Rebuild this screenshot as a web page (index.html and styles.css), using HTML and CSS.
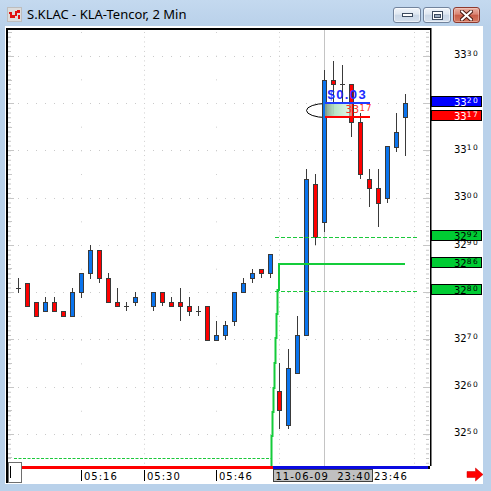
FILE: index.html
```html
<!DOCTYPE html>
<html>
<head>
<meta charset="utf-8">
<title>S.KLAC - KLA-Tencor, 2 Min</title>
<link rel="stylesheet" href="styles.css">
</head>
<body>
<div class="window">
  <div class="titlebar">
    <svg class="app-icon" width="15" height="15" viewBox="0 0 15 15">
      <rect x="0.5" y="0.5" width="14" height="14" fill="#dcdcdc" stroke="#bdbdbd"/>
      <rect x="2" y="5" width="3" height="2" fill="#e01010"/>
      <rect x="3" y="7" width="2" height="4" fill="#e01010"/>
      <rect x="5" y="8" width="3" height="3" fill="#e01010"/>
      <rect x="8" y="4" width="2" height="5" fill="#e01010"/>
      <rect x="10" y="3" width="3" height="3" fill="#e01010"/>
      <rect x="11" y="8" width="2" height="4" fill="#e01010"/>
    </svg>
    <span class="title">S.KLAC - KLA-Tencor, 2 Min</span>
    <div class="controls">
      <button class="btn">
        <svg width="13" height="6" viewBox="0 0 13 6"><rect x="1.5" y="1.5" width="10" height="3" fill="#fff" stroke="#3c4a5e"/></svg>
      </button>
      <button class="btn">
        <svg width="11" height="9" viewBox="0 0 11 9"><rect x="0.5" y="0.5" width="10" height="8" fill="#fff" stroke="#3c4a5e"/><rect x="2.5" y="3.5" width="6" height="3" fill="#9aaabf" stroke="#3c4a5e"/></svg>
      </button>
      <button class="btn close">
        <svg width="13" height="11" viewBox="0 0 13 11"><path d="M2 1.5 L11 9.5 M11 1.5 L2 9.5" stroke="#4a1a12" stroke-width="4" stroke-linecap="square"/><path d="M2 1.5 L11 9.5 M11 1.5 L2 9.5" stroke="#fff" stroke-width="2" stroke-linecap="square"/></svg>
      </button>
    </div>
  </div>

  <div class="client">
    <svg class="plot" width="426" height="440" viewBox="5 26 426 440">
      <defs>
        <linearGradient id="pnl" x1="0" x2="1" y1="0" y2="0">
          <stop offset="0" stop-color="#7f9c88" stop-opacity="0.95"/>
          <stop offset="0.35" stop-color="#b3e2c2" stop-opacity="0.95"/>
          <stop offset="1" stop-color="#c9eed5" stop-opacity="0.55"/>
        </linearGradient>
      </defs>

      <g class="grid">
        <line class="hdot" x1="18" x2="428" y1="56.5" y2="56.5"/>
        <line class="hdot" x1="18" x2="428" y1="103.5" y2="103.5"/>
        <line class="hdot" x1="18" x2="428" y1="150.5" y2="150.5"/>
        <line class="hdot" x1="18" x2="428" y1="198.5" y2="198.5"/>
        <line class="hdot" x1="18" x2="428" y1="245.5" y2="245.5"/>
        <line class="hdot" x1="18" x2="428" y1="292.5" y2="292.5"/>
        <line class="hdot" x1="18" x2="428" y1="339.5" y2="339.5"/>
        <line class="hdot" x1="18" x2="428" y1="387.5" y2="387.5"/>
        <line class="hdot" x1="18" x2="428" y1="434.5" y2="434.5"/>
        <line class="vdense" x1="144.5" x2="144.5" y1="32" y2="466"/>
        <line class="vdense" x1="279.5" x2="279.5" y1="32" y2="466"/>
        <line class="vdense" x1="414.5" x2="414.5" y1="32" y2="466"/>
        <line class="vsparse" x1="81.5" x2="81.5" y1="32" y2="466"/>
        <line class="vsparse" x1="216.5" x2="216.5" y1="32" y2="466"/>
        <line class="ticks" x1="9.5" x2="9.5" y1="32" y2="466"/>
        <line class="ticks" x1="427.5" x2="427.5" y1="32" y2="466"/>
        <path class="tick" d="M8 56.5h6M8 103.5h6M8 150.5h6M8 198.5h6M8 245.5h6M8 292.5h6M8 339.5h6M8 387.5h6M8 434.5h6
                               M8 80.5h4M8 127.5h4M8 174.5h4M8 221.5h4M8 268.5h4M8 316.5h4M8 363.5h4M8 410.5h4M8 457.5h4M8 32.5h4
                               M424 56.5h6M424 103.5h6M424 150.5h6M424 198.5h6M424 245.5h6M424 292.5h6M424 339.5h6M424 387.5h6M424 434.5h6"/>
      </g>

      <line class="cross" x1="324.5" x2="324.5" y1="28" y2="466"/>

      <path class="ellipse" d="M326 103.5 A19.5 7 0 0 0 326 117.5"/>

      <g class="wick">
        <path d="M18.5 278V293M45.5 297V302M54.5 297V302M72.5 288V292M81.5 292V298M90.5 245V279M99.5 278V283
                 M108.5 273V278M117.5 288V302M126.5 302V311M135.5 292V306M153.5 306V311M162.5 302V306M171.5 297V302
                 M180.5 288V321M189.5 297V316M198.5 306V316M216.5 321V335M225.5 321V340M234.5 321V326M243.5 278V283
                 M252.5 269V283M261.5 273V278M270.5 273V278M279.5 363V429M288.5 349V429M297.5 316V335M306.5 169V179
                 M315.5 174V245M324.5 70V232M333.5 61V114M342.5 65V103M351.5 122V137M360.5 113V179M369.5 169V207
                 M378.5 169V227M387.5 198V203M396.5 113V152M405.5 94V156"/>
        <path d="M16 288.5h5M124 306.5h5M196 311.5h5M340 84.5h5"/>
      </g>

      <g class="body">
        <rect class="dn" x="25.5" y="283.5" width="4" height="23"/>
        <rect class="dn" x="34.5" y="302.5" width="4" height="14"/>
        <rect class="up" x="43.5" y="302.5" width="4" height="9"/>
        <rect class="dn" x="52.5" y="302.5" width="4" height="9"/>
        <rect class="dn" x="61.5" y="311.5" width="4" height="5"/>
        <rect class="up" x="70.5" y="292.5" width="4" height="24"/>
        <rect class="up" x="79.5" y="273.5" width="4" height="19"/>
        <rect class="up" x="88.5" y="250.5" width="4" height="23"/>
        <rect class="dn" x="97.5" y="250.5" width="4" height="28"/>
        <rect class="dn" x="106.5" y="278.5" width="4" height="24"/>
        <rect class="dn" x="115.5" y="302.5" width="4" height="4"/>
        <rect class="up" x="133.5" y="297.5" width="4" height="5"/>
        <rect class="up" x="151.5" y="292.5" width="4" height="14"/>
        <rect class="dn" x="160.5" y="292.5" width="4" height="10"/>
        <rect class="dn" x="169.5" y="302.5" width="4" height="4"/>
        <rect class="dn" x="178.5" y="302.5" width="4" height="4"/>
        <rect class="dn" x="187.5" y="306.5" width="4" height="5"/>
        <rect class="dn" x="205.5" y="306.5" width="4" height="34"/>
        <rect class="up" x="214.5" y="335.5" width="4" height="5"/>
        <rect class="up" x="223.5" y="325.5" width="4" height="10"/>
        <rect class="up" x="232.5" y="292.5" width="4" height="29"/>
        <rect class="up" x="241.5" y="283.5" width="4" height="9"/>
        <rect class="up" x="250.5" y="273.5" width="4" height="5"/>
        <rect class="dn" x="259.5" y="269.5" width="4" height="4"/>
        <rect class="up" x="268.5" y="254.5" width="4" height="19"/>
        <rect class="dn" x="277.5" y="391.5" width="4" height="19"/>
        <rect class="up" x="286.5" y="368.5" width="4" height="57"/>
        <rect class="up" x="295.5" y="335.5" width="4" height="38"/>
        <rect class="up" x="304.5" y="179.5" width="4" height="156"/>
        <rect class="dn" x="313.5" y="184.5" width="4" height="53"/>
        <rect class="up" x="322.5" y="80.5" width="4" height="142"/>
        <rect class="dn" x="331.5" y="80.5" width="4" height="4"/>
        <rect class="dn" x="349.5" y="84.5" width="4" height="38"/>
        <rect class="dn" x="358.5" y="122.5" width="4" height="52"/>
        <rect class="dn" x="367.5" y="179.5" width="4" height="9"/>
        <rect class="dn" x="376.5" y="188.5" width="4" height="15"/>
        <rect class="up" x="385.5" y="146.5" width="4" height="52"/>
        <rect class="up" x="394.5" y="132.5" width="4" height="15"/>
        <rect class="up" x="403.5" y="103.5" width="4" height="14"/>
      </g>

      <line class="gdash" x1="275" x2="418" y1="237.5" y2="237.5"/>
      <line class="gdash" x1="275" x2="418" y1="291.5" y2="291.5"/>
      <line class="gdash small" x1="14" x2="271" y1="458.5" y2="458.5"/>
      <polyline class="step" points="271.5,466 271.5,436 272.5,436 272.5,412 273.5,412 273.5,388 274.5,388 274.5,363 275.5,363 275.5,338 276.5,338 276.5,314 277.5,314 277.5,290 279,290 279,264 405,264"/>

      <rect class="pnl" x="325" y="104" width="27" height="12"/>
      <rect class="bline" x="325" y="102" width="45" height="2"/>
      <rect class="rline" x="325" y="116" width="45" height="2"/>
      <text class="pnl-text" x="327.5" y="98.5">$0.03</text>
      <text class="pnl-price" x="345.5" y="113">33<tspan class="psup" dy="-2">17</tspan></text>

      <rect class="frame" x="6" y="28" width="2" height="438"/>
      <rect class="frame" x="6" y="28" width="425" height="2"/>
      <rect class="frame" x="430" y="28" width="1.5" height="438"/>
    </svg>

    <svg class="price-axis" width="52" height="440" viewBox="431 26 52 440">
      <g class="plabel">
        <text x="454" y="58">33<tspan class="sup" dy="-2.5">30</tspan></text>
        <text x="454" y="152.5">33<tspan class="sup" dy="-2.5">10</tspan></text>
        <text x="454" y="200">33<tspan class="sup" dy="-2.5">00</tspan></text>
        <text x="454" y="247.5">32<tspan class="sup" dy="-2.5">90</tspan></text>
        <text x="454" y="341.5">32<tspan class="sup" dy="-2.5">70</tspan></text>
        <text x="454" y="389">32<tspan class="sup" dy="-2.5">60</tspan></text>
        <text x="454" y="436">32<tspan class="sup" dy="-2.5">50</tspan></text>
      </g>
      <rect class="bx blue" x="431.5" y="96.5" width="50" height="10"/>
      <text class="plabel inv" x="454" y="105.5">33<tspan class="sup" dy="-2.5">20</tspan></text>
      <rect class="bx red" x="431.5" y="110.5" width="50" height="10"/>
      <text class="plabel inv" x="454" y="119.5">33<tspan class="sup" dy="-2.5">17</tspan></text>
      <rect class="bx green" x="431.5" y="230.5" width="50" height="10"/>
      <text class="plabel" x="454" y="239.5">32<tspan class="sup" dy="-2.5">92</tspan></text>
      <rect class="bx green" x="431.5" y="257.5" width="50" height="10"/>
      <text class="plabel" x="454" y="266.5">32<tspan class="sup" dy="-2.5">86</tspan></text>
      <rect class="bx green" x="431.5" y="284.5" width="50" height="10"/>
      <text class="plabel" x="454" y="293.5">32<tspan class="sup" dy="-2.5">80</tspan></text>
    </svg>

    <svg class="time-axis" width="478" height="18" viewBox="5 466 478 18">
      <rect class="frame" x="6" y="462" width="2" height="21"/>
      <rect class="sess-red" x="8" y="466" width="265" height="3"/>
      <rect class="sess-blue" x="273" y="466" width="156" height="3"/>
      <rect class="frame" x="428" y="466" width="2" height="3"/>
      <rect class="handle" x="8.5" y="462.5" width="13" height="20"/>
      <line class="caret" x1="10.5" x2="10.5" y1="466" y2="478"/>
      <path class="tmark" d="M81.5 470V481M144.5 470V481M216.5 470V481"/>
      <text class="tlabel" x="84" y="479.5">05:16</text>
      <text class="tlabel" x="147" y="479.5">05:30</text>
      <text class="tlabel" x="219" y="479.5">05:46</text>
      <rect class="datebox" x="273.5" y="469.5" width="99" height="12"/>
      <text class="tlabel" x="275.5" y="479.5" xml:space="preserve">11-06-09  23:40</text>
      <text class="tlabel" x="374" y="479.5">23:46</text>
      <path class="arrow" d="M467 471.5H475.5V468L483 474.5L475.5 481V477.5H467Z"/>
    </svg>
  </div>
</div>
</body>
</html>
```

FILE: styles.css
```css
html, body {
  margin: 0;
  padding: 0;
}
body {
  width: 491px;
  height: 491px;
  overflow: hidden;
  background: #b9d1ea;
}
.window {
  width: 491px;
  height: 491px;
  display: flex;
  flex-direction: column;
  background: linear-gradient(#c4d9ef 0px, #b9d1ea 26px, #b9d1ea 100%);
}
.titlebar {
  height: 26px;
  flex: none;
  display: flex;
  align-items: flex-start;
  padding: 7px 11px 0 7px;
  box-sizing: border-box;
}
.app-icon {
  display: block;
  flex: none;
}
.title {
  margin-left: 5px;
  margin-top: -1px;
  font-family: "Noto Sans", "DejaVu Sans", sans-serif;
  font-size: 13px;
  line-height: 16px;
  color: #000;
  white-space: nowrap;
}
.controls {
  margin-left: auto;
  display: flex;
  gap: 2px;
}
.btn {
  width: 28px;
  height: 16px;
  padding: 0;
  margin: 0;
  box-sizing: border-box;
  border: 1px solid #71839c;
  border-radius: 3px;
  background: linear-gradient(#f1f5fa 0%, #dfe7f1 45%, #c9d6e6 50%, #d6e1ee 100%);
  display: flex;
  align-items: center;
  justify-content: center;
  box-shadow: inset 0 0 0 1px rgba(255,255,255,0.55);
}
.btn.close {
  width: 27px;
  border-color: #8d3a2f;
  background: linear-gradient(#e8b2a6 0%, #da8574 45%, #c85c47 50%, #d37a63 100%);
  box-shadow: inset 0 0 0 1px rgba(255,220,210,0.4);
}
.btn svg { display: block; }

.client {
  margin: 0 8px 7px 5px;
  flex: 1;
  background: #fff;
  display: grid;
  grid-template-columns: 426px 52px;
  grid-template-rows: 440px 18px;
}
.plot, .price-axis, .time-axis {
  display: block;
  overflow: visible;
}
.time-axis {
  grid-column: 1 / 3;
}

/* plot */
.hdot { stroke: #c9c9c9; stroke-width: 1; stroke-dasharray: 1 8; }
.vdense { stroke: #cfcfcf; stroke-width: 1; stroke-dasharray: 1 3.733; }
.vsparse { stroke: #cfcfcf; stroke-width: 1; stroke-dasharray: 1 22.67; }
.ticks { stroke: #c6c6c6; stroke-width: 3; stroke-dasharray: 1 3.733; }
.tick { stroke: #c6c6c6; stroke-width: 1; fill: none; }
.cross { stroke: #c4c4c4; stroke-width: 1; }
.ellipse { fill: none; stroke: #000; stroke-width: 1; }
.wick path { stroke: #3a3a3a; stroke-width: 1; fill: none; }
.body rect { stroke: #3a3a3a; stroke-width: 1; }
.body .up { fill: #0a74ee; }
.body .dn { fill: #ff0000; }
.gdash { stroke: #1cc83c; stroke-width: 1; stroke-dasharray: 4 2; }
.gdash.small { stroke-dasharray: 3 1.5; }
.step { fill: none; stroke: #14cc3a; stroke-width: 2; }
.pnl { fill: url(#pnl); }
.bline { fill: #1f3cff; }
.rline { fill: #ff0000; }
.pnl-text {
  font-family: "Liberation Sans", Arial, sans-serif;
  font-weight: bold;
  font-size: 13px;
  letter-spacing: 1.4px;
  fill: #1a2cff;
}
.pnl-price {
  font-family: "DejaVu Sans", sans-serif;
  font-size: 10.5px;
  letter-spacing: 0.3px;
  fill: #ff3020;
}
.psup {
  font-size: 8.5px;
  letter-spacing: 1px;
}
.frame { fill: #000; }

/* price axis */
.plabel, .plabel text {
  font-family: "DejaVu Sans", sans-serif;
  font-size: 10px;
  fill: #000;
}
.sup {
  font-size: 7.5px;
  letter-spacing: 1.6px;
}
.plabel.inv { fill: #fff; }
.bx { stroke: #000; stroke-width: 1; }
.bx.blue { fill: #0000ff; }
.bx.red { fill: #ff0000; }
.bx.green { fill: #00cc33; }

/* time axis */
.sess-red { fill: #ff0000; }
.sess-blue { fill: #0a0ae0; }
.handle { fill: #fff; stroke: #6e6e6e; stroke-width: 1; }
.caret { stroke: #000; stroke-width: 1; }
.tmark { stroke: #000; stroke-width: 1; fill: none; }
.tlabel {
  font-family: "DejaVu Sans", sans-serif;
  font-size: 10px;
  letter-spacing: 1px;
  fill: #000;
}
.datebox { fill: #c0c0c0; stroke: #404040; stroke-width: 1; }
.arrow { fill: #ff0000; stroke: #c80000; stroke-width: 0.5; }
```
